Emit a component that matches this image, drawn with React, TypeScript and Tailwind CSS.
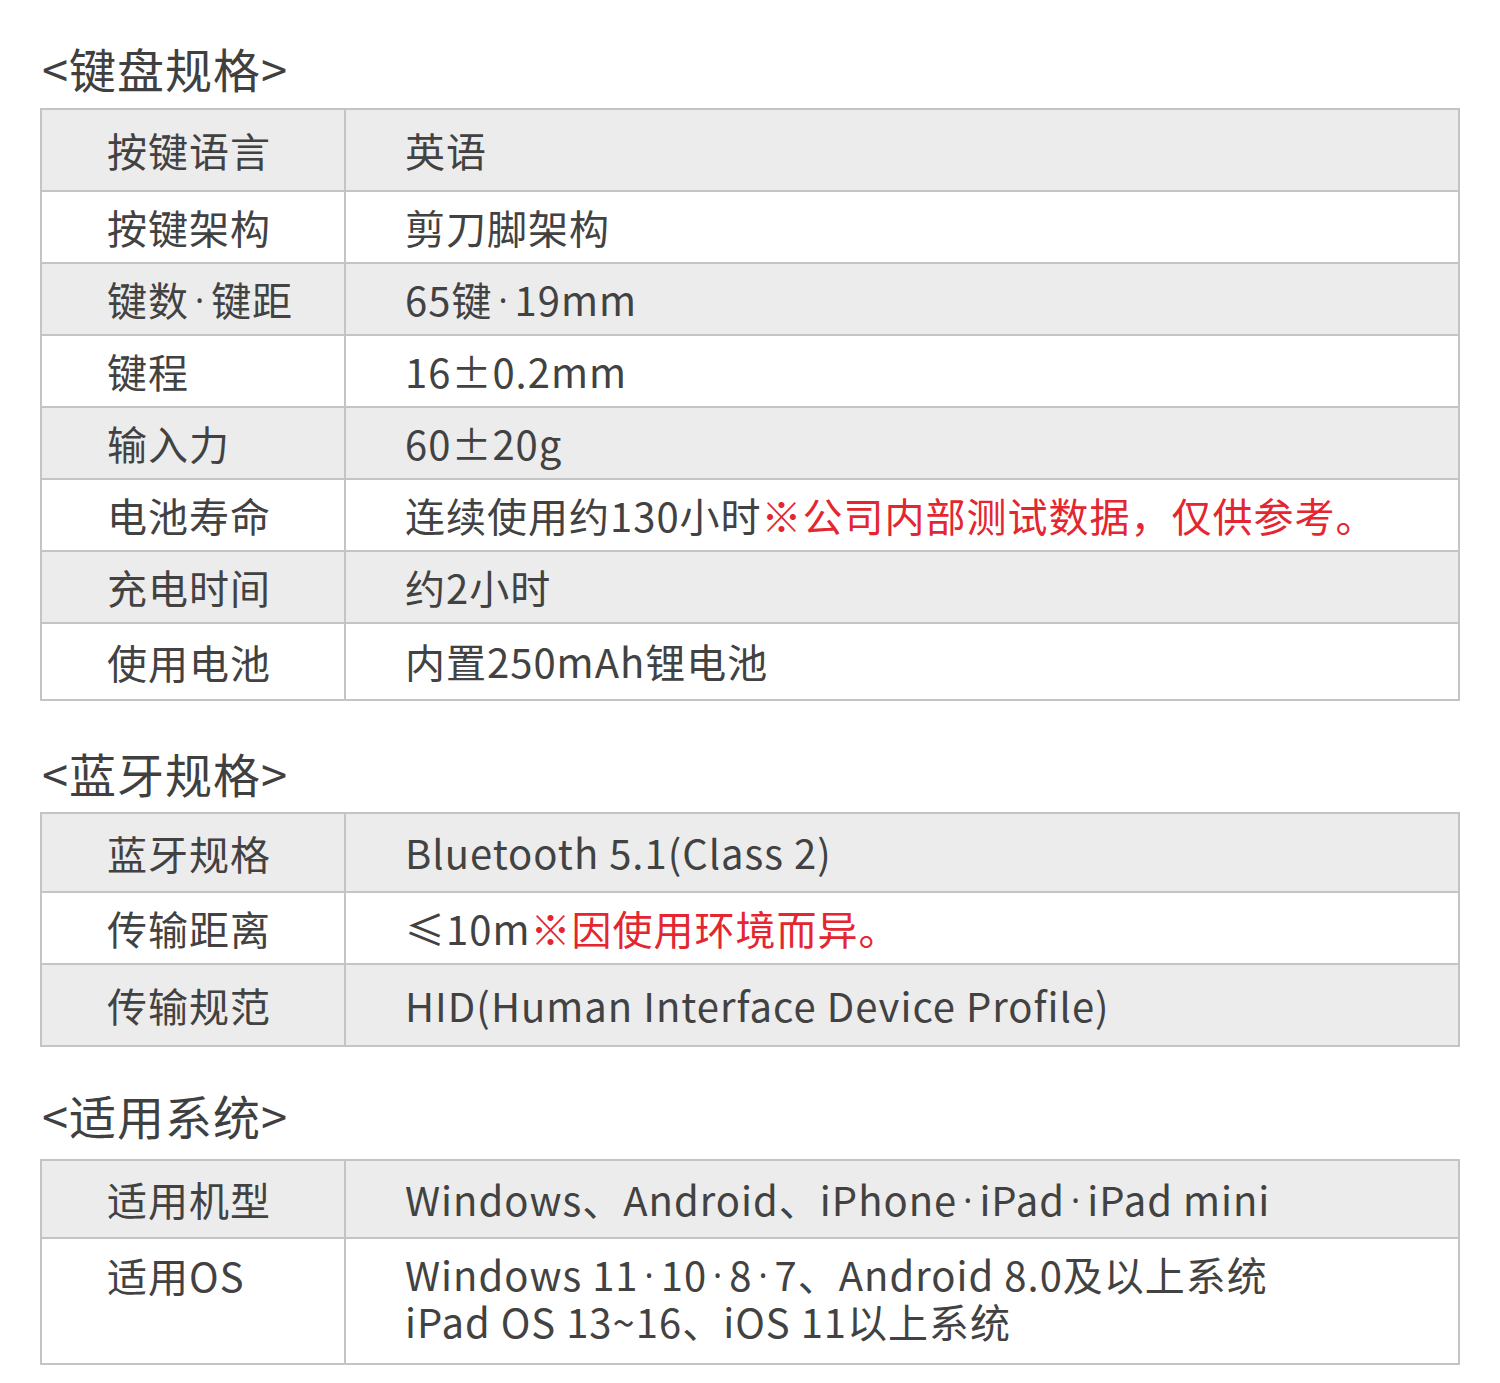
import React from 'react'

type Row = {
  label: React.ReactNode
  value: React.ReactNode
  h: string
  gray?: boolean
  top?: boolean
}

const Red = ({ children }: { children: React.ReactNode }) => (
  <span className="text-[#e3262f]">{children}</span>
)

// narrow latin middle dot, the CJK one is full width
const Dot = () => (
  <span className="relative -top-[3px] inline-block leading-none text-[34px] font-['Noto_Sans'] px-[6px]">·</span>
)

const keyboard: Row[] = [
  { label: '按键语言', value: '英语', h: 'h-[80px]', gray: true },
  { label: '按键架构', value: '剪刀脚架构', h: 'h-[72px]' },
  {
    label: (
      <>
        键数<Dot />键距
      </>
    ),
    value: (
      <>
        65键<Dot />19mm
      </>
    ),
    h: 'h-[72px]',
    gray: true,
  },
  { label: '键程', value: '16±0.2mm', h: 'h-[72px]' },
  { label: '输入力', value: '60±20g', h: 'h-[72px]', gray: true },
  {
    label: '电池寿命',
    value: (
      <>
        连续使用约130小时<Red>※公司内部测试数据，仅供参考。</Red>
      </>
    ),
    h: 'h-[72px]',
  },
  { label: '充电时间', value: '约2小时', h: 'h-[72px]', gray: true },
  { label: '使用电池', value: '内置250mAh锂电池', h: 'h-[77px]' },
]

const bluetooth: Row[] = [
  { label: '蓝牙规格', value: 'Bluetooth 5.1(Class 2)', h: 'h-[77px]', gray: true },
  {
    label: '传输距离',
    value: (
      <>
        ≤10m<Red>※因使用环境而异。</Red>
      </>
    ),
    h: 'h-[72px]',
  },
  { label: '传输规范', value: 'HID(Human Interface Device Profile)', h: 'h-[82px]', gray: true },
]

const systems: Row[] = [
  {
    label: '适用机型',
    value: (
      <>
        Windows、Android、iPhone<Dot />iPad<Dot />iPad mini
      </>
    ),
    h: 'h-[76px]',
    gray: true,
  },
  {
    label: '适用OS',
    value: (
      <>
        <div>
          Windows 11<Dot />10<Dot />8<Dot />7、Android 8.0及以上系统
        </div>
        <div>iPad OS 13~16、iOS 11以上系统</div>
      </>
    ),
    h: 'h-[126px]',
    top: true,
  },
]

const SpecTable = ({ rows }: { rows: Row[] }) => (
  <div className="mx-10 border-2 border-[#c4c4c4]">
    {rows.map((r, i) => (
      <div
        key={i}
        className={`grid grid-cols-[304px_1fr] ${r.h} ${r.gray ? 'bg-[#ececec]' : 'bg-white'} ${
          i > 0 ? 'border-t-2 border-[#c4c4c4]' : ''
        }`}
      >
        <div
          className={`flex border-r-2 border-[#c4c4c4] pl-[65px] leading-[48px] ${
            r.top ? 'items-start pt-[12px]' : 'items-center'
          }`}
        >
          <div>{r.label}</div>
        </div>
        <div className={`flex pl-[59px] leading-[47px] ${r.top ? 'items-start pt-[12px]' : 'items-center'}`}>
          <div>{r.value}</div>
        </div>
      </div>
    ))}
  </div>
)

const Title = ({ children, cls }: { children: React.ReactNode; cls: string }) => (
  <h2 className={`ml-[42px] text-[47px] leading-[56px] text-[#404040] ${cls}`}>{children}</h2>
)

export default function App() {
  return (
    <div
      className="w-[1500px] min-h-[1383px] bg-white text-[40px] font-normal tracking-[1px] text-[#424242]"
      style={{ fontFamily: '"Noto Sans CJK SC", "Noto Sans", sans-serif' }}
    >
      <div className="pt-[40px]">
        <Title cls="mb-[12px]">&lt;键盘规格&gt;</Title>
        <SpecTable rows={keyboard} />
        <Title cls="mt-[44px] mb-[11px]">&lt;蓝牙规格&gt;</Title>
        <SpecTable rows={bluetooth} />
        <Title cls="mt-[40px] mb-[16px]">&lt;适用系统&gt;</Title>
        <SpecTable rows={systems} />
      </div>
    </div>
  )
}
